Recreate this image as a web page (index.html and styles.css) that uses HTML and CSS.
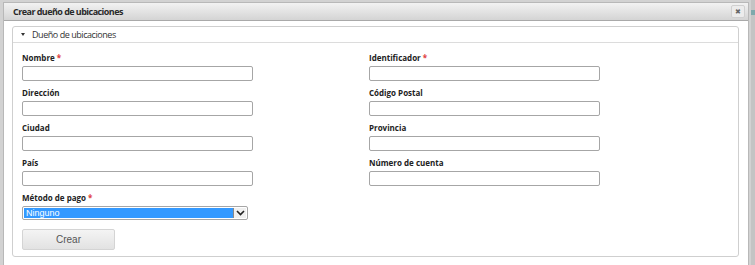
FILE: index.html
```html
<!DOCTYPE html>
<html lang="es">
<head>
    <meta charset="UTF-8">
    <title>Crear dueño de ubicaciones</title>
    <link rel="stylesheet" href="styles.css">
</head>
<body>
    <div class="side-right"><span class="stripe"></span></div>
    <section class="dialog">
        <header class="dialog-header">
            <h1 class="dialog-title">Crear dueño de ubicaciones</h1>
            <span class="close">&#x2716;</span>
        </header>
        <div class="panel">
            <div class="panel-head"><span class="arrow"></span>Dueño de ubicaciones</div>
            <form class="panel-body">
                <div class="grid">
                    <div class="field"><label>Nombre<span class="req">*</span></label><input type="text"></div>
                    <div class="field"><label>Identificador<span class="req">*</span></label><input type="text"></div>
                    <div class="field"><label>Dirección</label><input type="text"></div>
                    <div class="field"><label>Código Postal</label><input type="text"></div>
                    <div class="field"><label>Ciudad</label><input type="text"></div>
                    <div class="field"><label>Provincia</label><input type="text"></div>
                    <div class="field"><label>País</label><input type="text"></div>
                    <div class="field"><label>Número de cuenta</label><input type="text"></div>
                    <div class="field">
                        <label>Método de pago<span class="req">*</span></label>
                        <div class="select">
                            <span class="select-value">Ninguno</span>
                            <span class="select-btn">
                                <svg width="9" height="6" viewBox="0 0 9 6"><path d="M1 1 L4.5 4.5 L8 1" fill="none" stroke="#222" stroke-width="1.6"/></svg>
                            </span>
                        </div>
                    </div>
                </div>
                <button type="button" class="btn">Crear</button>
            </form>
        </div>
    </section>
</body>
</html>
```

FILE: styles.css
```css
body{
    margin: 0;
    background: #d2d2d2;
    font-family: 'Open Sans', 'Liberation Sans', sans-serif;
    color: #333;
    height: 265px;
    overflow: hidden;
    position: relative;
}
.side-right{
    position: absolute;
    top: 0;
    right: 0;
    width: 4px;
    height: 100%;
    background: #c4c4c4;
}
.side-right .stripe{
    display: block;
    margin-top: 10px;
    height: 5px;
    background: #7fa9ac;
}
.dialog{
    margin: 2px 0 0 3px;
    width: 746px;
    height: 270px;
    background: #fff;
    border: 1px solid #b8b8b8;
    box-sizing: border-box;
}
.dialog-header{
    height: 17px;
    display: flex;
    align-items: center;
    justify-content: space-between;
    padding: 0 3px 0 9px;
    background: linear-gradient(#f2f2f2, #d4d4d4);
    border-bottom: 1px solid #a9a9a9;
}
.dialog-title{
    margin: 0;
    font-size: 9px;
    font-weight: 700;
    letter-spacing: -0.55px;
    color: #2a2a2a;
}
.close{
    width: 12px;
    height: 11px;
    display: flex;
    justify-content: center;
    align-items: center;
    font-size: 7px;
    color: #666;
    background: #ececec;
    border: 1px solid #d0d0d0;
    border-radius: 2px;
}
.panel{
    margin: 5px 9px 0 8px;
    border: 1px solid #cfcfcf;
    border-radius: 3px;
    height: 231px;
    box-sizing: border-box;
}
.panel-head{
    height: 15px;
    display: flex;
    align-items: center;
    padding-left: 8px;
    font-size: 9px;
    letter-spacing: -0.45px;
    color: #333;
    border-bottom: 1px solid #dcdcdc;
}
.arrow{
    width: 0;
    height: 0;
    border-left: 2.5px solid transparent;
    border-right: 2.5px solid transparent;
    border-top: 3px solid #333;
    margin-right: 7px;
}
.panel-body{
    padding: 9px 0 0 9px;
}
.grid{
    display: grid;
    grid-template-columns: 347px 347px;
    row-gap: 6px;
}
.field{
    display: flex;
    flex-direction: column;
}
.field label{
    font-size: 8px;
    font-weight: 700;
    color: #222;
    height: 12px;
    line-height: 12px;
    margin-bottom: 2px;
}
.req{
    color: #e04040;
    margin-left: 2px;
}
.field input{
    width: 231px;
    height: 15px;
    box-sizing: border-box;
    border: 1px solid #a6a6a6;
    border-radius: 2px;
    padding: 0 3px;
    outline: 0;
    margin: 0;
}
.select{
    width: 226px;
    height: 14px;
    box-sizing: border-box;
    border: 1px solid #a6a6a6;
    border-radius: 2px;
    display: flex;
    padding: 1px;
}
.select-value{
    flex: 1;
    background: #3399ff;
    color: #fff;
    font-family: 'Liberation Sans', sans-serif;
    font-size: 9px;
    line-height: 10px;
    padding-left: 2px;
}
.select-btn{
    width: 12px;
    display: flex;
    justify-content: center;
    align-items: center;
    background: #f0f0f0;
    border-left: 1px solid #888;
}
.btn{
    margin-top: 9px;
    width: 93px;
    height: 21px;
    border: 1px solid #d4d4d4;
    border-radius: 2px;
    background: linear-gradient(#f4f4f4, #e2e2e2);
    color: #555;
    font-family: 'Liberation Sans', sans-serif;
    font-size: 10px;
    cursor: pointer;
}
```
